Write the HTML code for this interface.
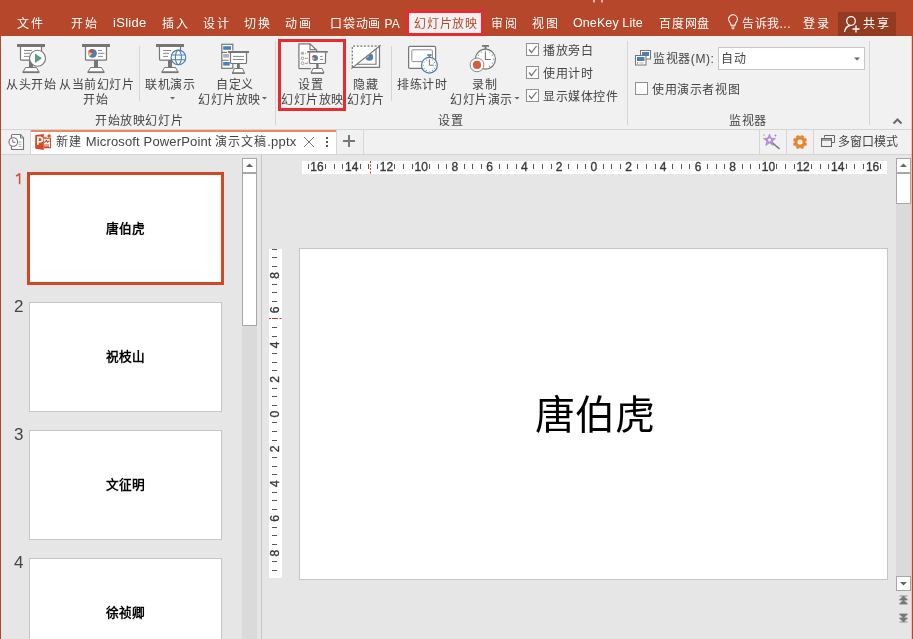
<!DOCTYPE html>
<html lang="zh-CN">
<head>
<meta charset="utf-8">
<style>
*{margin:0;padding:0;box-sizing:border-box}
html,body{width:913px;height:639px;overflow:hidden}
body{position:relative;background:#e6e6e6;font-family:"Liberation Sans",sans-serif;font-size:12px;color:#444}
.a{position:absolute}
.t{position:absolute;white-space:nowrap;line-height:14px;font-size:12px}
.m{position:absolute;white-space:nowrap;line-height:14px;font-size:12px;letter-spacing:1.5px}
.w{color:#fff}
#title{left:0;top:0;width:913px;height:36px;background:#b7472a}
#ribbon{left:0;top:36px;width:913px;height:94px;background:#f1f1f1;border-bottom:1px solid #d5d5d5}
#tabbar{left:0;top:130px;width:913px;height:25px;background:#f1f1f1;border-bottom:1px solid #d5d5d5}
.r{position:absolute;white-space:nowrap;line-height:14px;font-size:12px;color:#444;letter-spacing:.6px}
.th{position:absolute;white-space:nowrap;line-height:14px;font-size:12.7px;font-weight:bold;color:#000}
.sep{position:absolute;width:1px;background:#d5d5d5}
.cb{position:absolute;width:13px;height:13px;border:1px solid #8a8a8a;background:#fff}
</style>
</head>
<body>
<div id="wrap" style="position:absolute;left:0;top:0;width:913px;height:639px;will-change:transform">
<div id="title" class="a"></div>
<div id="ribbon" class="a"></div>
<div id="tabbar" class="a"></div>
<!-- menu -->
<div class="m w" style="left:17px;top:17px">文件</div>
<div class="m w" style="left:71px;top:17px">开始</div>
<div class="m w" style="left:113px;top:16px;font-size:13px;letter-spacing:.3px">iSlide</div>
<div class="m w" style="left:162px;top:17px">插入</div>
<div class="m w" style="left:203px;top:17px">设计</div>
<div class="m w" style="left:244px;top:17px">切换</div>
<div class="m w" style="left:285px;top:17px">动画</div>
<div class="m w" style="left:330px;top:17px;letter-spacing:.8px">口袋动画<span style="font-size:12px;letter-spacing:0"> PA</span></div>
<div class="a" style="left:406px;top:10px;width:78px;height:26px;background:#f1f1f1;border:3px solid #ea2a2f"></div>
<div class="m" style="left:414px;top:17px;color:#b7472a;letter-spacing:.8px">幻灯片放映</div>
<div class="m w" style="left:491px;top:17px">审阅</div>
<div class="m w" style="left:532px;top:17px">视图</div>
<div class="m w" style="left:573px;top:16px;font-size:12.5px;letter-spacing:.1px">OneKey Lite</div>
<div class="m w" style="left:659px;top:17px;letter-spacing:.8px">百度网盘</div>
<div class="m w" style="left:742px;top:17px;letter-spacing:.5px">告诉我...</div>
<div class="m w" style="left:803px;top:17px">登录</div>
<div class="a" style="left:838px;top:12px;width:58px;height:24px;background:#923b21"></div>
<div class="m w" style="left:863px;top:17px">共享</div>



<svg class="a" style="left:726px;top:14px" width="14" height="17" viewBox="0 0 14 17">
 <path d="M5,11.3 Q5,9.6 3.9,8.3 Q2.6,6.8 2.6,5.2 A4.4,4.4 0 0 1 11.4,5.2 Q11.4,6.8 10.1,8.3 Q9,9.6 9,11.3 Z" fill="none" stroke="#fff" stroke-width="1.1"/>
 <path d="M5.2,13 H8.8 M5.8,14.8 H8.2" stroke="#fff" stroke-width="1.1"/>
</svg>
<svg class="a" style="left:843px;top:15px" width="18" height="18" viewBox="0 0 18 18">
 <circle cx="8" cy="6" r="4.3" fill="none" stroke="#fff" stroke-width="1.3"/>
 <path d="M1.5,17 Q2.5,11.5 7,10.5" fill="none" stroke="#fff" stroke-width="1.3"/>
 <path d="M13,10.5 V17.5 M9.5,14 H16.5" stroke="#fff" stroke-width="1.3"/>
</svg>
<svg class="a" style="left:590px;top:0" width="16" height="3"><path d="M4,0 V2.5 M12,0 V2.5" stroke="#fff" stroke-width="1.2"/></svg>
<!-- ribbon icons -->
<svg class="a" style="left:0;top:35px" width="911" height="94" viewBox="0 35 911 94">
<defs>
<g id="pj">
 <rect x="0" y="0" width="28" height="3" fill="#767676"/>
 <path d="M3.5,3 V15.3 Q3.5,16.2 4.5,16.2 H23.5 Q24.5,16.2 24.5,15.3 V3" fill="#fff" stroke="#767676" stroke-width="1.2"/>
 <rect x="12" y="16" width="4" height="7" fill="#767676"/>
 <path d="M8.5,23.5 H19.5 L22,28 H6 Z" fill="#fff" stroke="#767676" stroke-width="1"/>
 <rect x="5.5" y="27.5" width="17" height="1.6" fill="#767676"/>
</g>
</defs>
<!-- icon1 从头开始 -->
<g transform="translate(17,44)">
 <use href="#pj"/>
 <path d="M7,6.5 H15 M7,9.3 H13 M7,12.4 H12" stroke="#8a8a8a" stroke-width="1"/>
 <circle cx="20.5" cy="14.3" r="8" fill="#fff" stroke="#767676" stroke-width="1.1"/>
 <path d="M18,9.6 L25,14.3 L18,19 Z" fill="#5c9f87"/>
</g>
<!-- icon2 从当前幻灯片开始 -->
<g transform="translate(82,44)">
 <use href="#pj"/>
 <circle cx="10.5" cy="9.3" r="4.4" fill="#4a7ebb"/>
 <path d="M10.5,9.3 L10.5,4.9 A4.4,4.4 0 0 0 6.3,8 Z" fill="#d9472b"/>
 <path d="M10.5,9.3 L6.3,8 A4.4,4.4 0 0 0 7.5,12.5 Z" fill="#f0c27f"/>
 <path d="M16,6.5 H20 M16,9.3 H22.5 M16,12.4 H21" stroke="#8a8a8a" stroke-width="1"/>
</g>
<!-- icon3 联机演示 -->
<g transform="translate(156,44)">
 <use href="#pj"/>
 <path d="M7,6.5 H15 M7,9.3 H13 M7,12.4 H12" stroke="#8a8a8a" stroke-width="1"/>
 <circle cx="22.4" cy="13.4" r="7.3" fill="#fff" stroke="#4a7ebb" stroke-width="1.2"/>
 <ellipse cx="22.4" cy="13.4" rx="3" ry="7.3" fill="none" stroke="#4a7ebb" stroke-width="1.1"/>
 <path d="M15.2,11 H29.6 M15.2,15.8 H29.6" stroke="#4a7ebb" stroke-width="1.1"/>
</g>
<!-- icon4 自定义幻灯片放映 -->
<g transform="translate(215,38)">
 <rect x="6.8" y="6.3" width="11" height="24" fill="#fff" stroke="#767676" stroke-width="1.2"/>
 <path d="M6.8,14.4 H12 M6.8,22.2 H13.8" stroke="#767676" stroke-width="1.1"/>
 <rect x="8.2" y="8.2" width="7.8" height="3.6" fill="#4a7ebb"/>
 <rect x="8.2" y="16" width="5.8" height="3.6" fill="#b0b0b0"/>
 <rect x="8.2" y="24" width="6.5" height="3.6" fill="#4a7ebb"/>
 <rect x="12.3" y="12.5" width="22.5" height="3.5" fill="#f1f1f1"/>
 <rect x="13" y="13" width="21" height="2" fill="#767676"/>
 <path d="M15.5,15 V24.5 Q15.5,25.5 16.5,25.5 H30.5 Q31.5,25.5 31.5,24.5 V15" fill="#fff" stroke="#767676" stroke-width="1.2"/>
 <path d="M18,18.4 H29 M18,21.5 H29" stroke="#8a8a8a" stroke-width="1"/>
 <rect x="22" y="25.5" width="2.8" height="6" fill="#767676"/>
 <path d="M19.5,30.5 H27.5 L29.5,35 H17.5 Z" fill="#fff" stroke="#767676" stroke-width="1"/>
 <rect x="17" y="34.5" width="13" height="1.4" fill="#767676"/>
</g>
<!-- icon5 设置幻灯片放映 -->
<g transform="translate(290,38)">
 <path d="M8.9,30.6 V5.8 H20 L26.7,12.2 V14" fill="#fff" stroke="#767676" stroke-width="1.2"/>
 <path d="M20,5.8 V11.6 H26.7" fill="none" stroke="#767676" stroke-width="1.1"/>
 <path d="M8.9,30.6 H21" stroke="#767676" stroke-width="1.2"/>
 <circle cx="12.5" cy="15.3" r="1.3" fill="#b0b0b0" stroke="#999" stroke-width=".6"/>
 <circle cx="12.5" cy="20.3" r="1.3" fill="#fff" stroke="#888" stroke-width=".8"/>
 <circle cx="12.5" cy="25.3" r="1.3" fill="#fff" stroke="#888" stroke-width=".8"/>
 <path d="M15,15.3 H16 M15,20.3 H18 M15,25.3 H18" stroke="#999" stroke-width="1"/>
 <rect x="17.2" y="13" width="20.6" height="1.8" fill="#767676"/>
 <path d="M19.5,14.8 V24.5 Q19.5,25.5 20.5,25.5 H34.5 Q35.5,25.5 35.5,24.5 V14.8" fill="#fff" stroke="#767676" stroke-width="1.2"/>
 <circle cx="25" cy="20" r="3" fill="#4a7ebb"/>
 <path d="M25,20 V17 A3,3 0 0 0 22.2,19 Z" fill="#d9472b"/>
 <path d="M25,20 L22.2,19 A3,3 0 0 0 23,22.2 Z" fill="#f0c27f"/>
 <path d="M30,18.4 H32.5 M30,21.5 H33" stroke="#8a8a8a" stroke-width="1"/>
 <rect x="26.2" y="25.5" width="2.4" height="6" fill="#767676"/>
 <path d="M23,30.5 H32 L34,35 H21 Z" fill="#fff" stroke="#767676" stroke-width="1"/>
 <rect x="21" y="34.5" width="13" height="1.4" fill="#767676"/>
</g>
<!-- icon6 隐藏幻灯片 -->
<g transform="translate(345,38)">
 <rect x="7.3" y="8.2" width="27.5" height="21" fill="#fff"/>
 <path d="M7.3,29 V8.2 H34.5" fill="none" stroke="#767676" stroke-width="1.2" stroke-dasharray="2,1.6"/>
 <path d="M34.5,8.2 V29.4 H7.3" fill="none" stroke="#767676" stroke-width="1.2"/>
 <path d="M31,11 V26.3 H12" fill="none" stroke="#767676" stroke-width="1.1"/>
 <clipPath id="hc"><path d="M6.3,31.5 L36.5,7.2 L36.5,31.5 Z"/></clipPath>
 <g clip-path="url(#hc)">
 <circle cx="24.4" cy="19" r="3.8" fill="#4a7ebb"/>
 <path d="M24.4,19 L21.5,16.5 A3.8,3.8 0 0 0 20.8,20 Z" fill="#f0c27f"/>
 <path d="M24.4,19 L24.4,15.2 A3.8,3.8 0 0 0 21.5,16.5 Z" fill="#d9472b"/>
 </g>
 <path d="M6.3,30.6 L35.6,7.2" stroke="#767676" stroke-width="1.2"/>
</g>
<!-- icon7 排练计时 -->
<g transform="translate(400,38)">
 <rect x="8.6" y="8.4" width="27" height="22" rx="1.2" fill="#fff" stroke="#767676" stroke-width="1.2"/>
 <rect x="11.8" y="11.8" width="20.6" height="11.8" rx="1" fill="#fff" stroke="#8f8f8f" stroke-width="1"/>
 <rect x="27.2" y="16.2" width="4.4" height="1.6" fill="#767676"/>
 <rect x="28.6" y="17.5" width="1.6" height="2" fill="#767676"/>
 <circle cx="29.4" cy="27.2" r="7.9" fill="#fff" stroke="#4a7ebb" stroke-width="1.2"/>
 <path d="M29.4,21.5 V27.2 H33.8" fill="none" stroke="#767676" stroke-width="1"/>
 <g fill="#888"><circle cx="35.40" cy="27.20" r=".55"/><circle cx="34.60" cy="30.20" r=".55"/><circle cx="32.40" cy="32.40" r=".55"/><circle cx="29.40" cy="33.20" r=".55"/><circle cx="26.40" cy="32.40" r=".55"/><circle cx="24.20" cy="30.20" r=".55"/><circle cx="23.40" cy="27.20" r=".55"/><circle cx="24.20" cy="24.20" r=".55"/><circle cx="26.40" cy="22.00" r=".55"/><circle cx="29.40" cy="21.20" r=".55"/><circle cx="32.40" cy="22.00" r=".55"/><circle cx="34.60" cy="24.20" r=".55"/></g>
</g>
<!-- icon8 录制 -->
<g transform="translate(462,38)">
 <circle cx="23.4" cy="21.2" r="10" fill="#fff" stroke="#767676" stroke-width="1.2"/>
 <rect x="20" y="7" width="7" height="1.8" fill="#767676"/>
 <rect x="22.6" y="8.5" width="1.8" height="2.6" fill="#767676"/>
 <path d="M23.4,14 V21.5 H28.8" fill="none" stroke="#767676" stroke-width="1.1"/>
 <g fill="#888"><circle cx="31.40" cy="21.20" r=".6"/><circle cx="30.33" cy="25.20" r=".6"/><circle cx="27.40" cy="28.13" r=".6"/><circle cx="15.40" cy="21.20" r=".6"/><circle cx="16.47" cy="17.20" r=".6"/><circle cx="19.40" cy="14.27" r=".6"/><circle cx="23.40" cy="13.20" r=".6"/><circle cx="27.40" cy="14.27" r=".6"/><circle cx="30.33" cy="17.20" r=".6"/></g>
 <circle cx="15" cy="26.9" r="6.9" fill="#fff" stroke="#8a8a8a" stroke-width="1"/>
 <circle cx="15" cy="26.9" r="4.1" fill="#dc5a3d"/>
</g>
<!-- checkboxes -->
<g fill="#fdfdfd" stroke="#8f8f8f" stroke-width="1">
 <rect x="526.5" y="43.5" width="12" height="12"/>
 <rect x="526.5" y="66.5" width="12" height="12"/>
 <rect x="526.5" y="89.5" width="12" height="12"/>
 <rect x="635.5" y="82.5" width="12" height="12"/>
</g>
<g fill="none" stroke="#707070" stroke-width="1.2">
 <path d="M529,49.5 L531.5,52.5 L536.5,46"/>
 <path d="M529,72.5 L531.5,75.5 L536.5,69"/>
 <path d="M529,95.5 L531.5,98.5 L536.5,92"/>
</g>
<!-- monitor icon -->
<g>
 <rect x="640.5" y="50.5" width="10" height="8.5" fill="#fff" stroke="#767676" stroke-width="1"/>
 <rect x="642" y="52" width="7" height="4" fill="#4a7ebb"/>
 <rect x="635.5" y="55.5" width="10.5" height="9.5" fill="#fff" stroke="#767676" stroke-width="1"/>
 <rect x="637" y="57" width="7.5" height="4" fill="#4a7ebb"/>
 <rect x="637" y="62.3" width="1.2" height="1.2" fill="#d9472b"/>
 <path d="M639.5,63 H643.5" stroke="#999" stroke-width=".8"/>
</g>
<!-- dropdown -->
<rect x="718.5" y="47.5" width="146" height="22" fill="#fff" stroke="#c6c6c6" stroke-width="1"/>
<path d="M854,57.5 H860 L857,60.5 Z" fill="#666"/>
<!-- separators -->
<g fill="#d5d5d5">
 <rect x="139" y="46" width="1" height="55"/>
 <rect x="275" y="41" width="1" height="84"/>
 <rect x="391" y="46" width="1" height="55"/>
 <rect x="627" y="41" width="1" height="84"/>
 <rect x="869" y="41" width="1" height="84"/>
</g>
<!-- small dropdown arrows -->
<g fill="#666">
 <path d="M170,97 H175 L172.5,99.5 Z"/>
 <path d="M262,97 H267 L264.5,99.5 Z"/>
 <path d="M514.5,97 H519.5 L517,99.5 Z"/>
</g>
<!-- collapse chevron -->
<path d="M893.5,123.5 L897.5,119.5 L901.5,123.5" fill="none" stroke="#6a6a6a" stroke-width="2"/>
<!-- red annotation box -->
<rect x="279.5" y="40.5" width="65" height="69" fill="none" stroke="#ea2a2f" stroke-width="3"/>
</svg>
<!-- ribbon labels -->
<div class="r" style="left:6px;top:78px">从头开始</div>
<div class="r" style="left:59px;top:78px">从当前幻灯片</div>
<div class="r" style="left:83px;top:93px">开始</div>
<div class="r" style="left:145px;top:78px">联机演示</div>
<div class="r" style="left:216px;top:78px">自定义</div>
<div class="r" style="left:198px;top:93px">幻灯片放映</div>
<div class="r" style="left:95px;top:114px">开始放映幻灯片</div>
<div class="r" style="left:298px;top:78px">设置</div>
<div class="r" style="left:281px;top:93px">幻灯片放映</div>
<div class="r" style="left:353px;top:78px">隐藏</div>
<div class="r" style="left:347px;top:93px">幻灯片</div>
<div class="r" style="left:397px;top:78px">排练计时</div>
<div class="r" style="left:472px;top:78px">录制</div>
<div class="r" style="left:450px;top:93px">幻灯片演示</div>
<div class="r" style="left:543px;top:44px">播放旁白</div>
<div class="r" style="left:543px;top:67px">使用计时</div>
<div class="r" style="left:543px;top:90px">显示媒体控件</div>
<div class="r" style="left:438px;top:114px">设置</div>
<div class="r" style="left:653px;top:52px">监视器(M):</div>
<div class="r" style="left:721px;top:52px">自动</div>
<div class="r" style="left:652px;top:83px">使用演示者视图</div>
<div class="r" style="left:729px;top:114px">监视器</div>


<!-- tab bar -->
<div class="a" style="left:1px;top:130px;width:30px;height:25px;border-right:1px solid #d5d5d5;border-bottom:1px solid #d5d5d5;background:#f1f1f1"></div>
<svg class="a" style="left:8px;top:132px" width="20" height="20" viewBox="0 0 20 20">
 <path d="M3.5,3 V17.5 H15.5 V6 L12.5,2.5 H3.5" fill="#fff" stroke="#767676" stroke-width="1.1"/>
 <path d="M12.5,2.5 V6 H15.5" fill="none" stroke="#767676" stroke-width="1"/>
 <path d="M10.5,10 H13.5 M10.5,12.2 H13.5 M10.5,14.4 H13.5" stroke="#999" stroke-width=".8"/>
 <circle cx="5.3" cy="10" r="4.3" fill="#fff" stroke="#767676" stroke-width="1.1"/>
 <path d="M4.8,7.5 V10.3" stroke="#d9472b" stroke-width="1"/>
 <path d="M4.8,10.3 H7.5" stroke="#4a7ebb" stroke-width="1"/>
</svg>
<div class="a" style="left:31px;top:130px;width:305px;height:24px;background:#fff;border-top:2px solid #ee8a5f"></div>
<div class="a" style="left:336px;top:130px;width:1px;height:25px;background:#d5d5d5"></div>
<div class="a" style="left:363px;top:130px;width:1px;height:25px;background:#d5d5d5"></div>
<svg class="a" style="left:34px;top:133px" width="20" height="18" viewBox="0 0 20 18">
 <path d="M9.5,5.2 H16.5 V14.6 H9.5" fill="#fff" stroke="#d24a26" stroke-width="1.1"/>
 <path d="M10,9.8 L12.5,7.5 L13.5,9.3 L15.5,7.8" fill="none" stroke="#d24a26" stroke-width="1.1"/>
 <path d="M10,12 H15 M10,13.8 H15 M10,4.2 H12.5" stroke="#d24a26" stroke-width="1.1"/>
 <path d="M1.2,2.8 Q1.2,2.2 1.8,2.1 L9.8,1 V17 L1.8,15.7 Q1.2,15.6 1.2,15 Z" fill="#d24a26"/>
 <path d="M3.9,11.8 V4.4 H6.2 Q8.4,4.4 8.4,6.6 Q8.4,8.8 6.2,8.8 H4.5" fill="none" stroke="#fff" stroke-width="1.7"/>
 <circle cx="15.1" cy="3" r="1.8" fill="#f25022"/>
</svg>
<div class="t" style="left:56px;top:135px;font-size:13px;letter-spacing:.15px;color:#444"><span style="font-size:12px;letter-spacing:1px">新建</span> Microsoft PowerPoint <span style="font-size:12px;letter-spacing:1px">演示文稿</span>.pptx</div>
<svg class="a" style="left:303px;top:136px" width="12" height="12" viewBox="0 0 12 12"><path d="M1,1 L11,11 M11,1 L1,11" stroke="#777" stroke-width="1"/></svg>
<div class="a" style="left:326px;top:137px;width:2px;height:2px;background:#555"></div>
<div class="a" style="left:326px;top:141px;width:2px;height:2px;background:#555"></div>
<div class="a" style="left:326px;top:145px;width:2px;height:2px;background:#555"></div>
<div class="a" style="left:343px;top:140px;width:12px;height:2px;background:#777"></div>
<div class="a" style="left:348px;top:135px;width:2px;height:12px;background:#777"></div>
<!-- right icons in tabbar -->
<div class="a" style="left:759px;top:130px;width:1px;height:25px;background:#d5d5d5"></div>
<div class="a" style="left:786px;top:130px;width:1px;height:25px;background:#d5d5d5"></div>
<div class="a" style="left:813px;top:130px;width:1px;height:25px;background:#d5d5d5"></div>
<svg class="a" style="left:762px;top:132px" width="20" height="20" viewBox="0 0 20 20">
 <path d="M9.5,10 L17.5,17" stroke="#777" stroke-width="1.6"/>
 <path d="M7.5,2 L9.2,6.1 L13.6,6.4 L10.2,9.2 L11.3,13.5 L7.5,11.1 L3.7,13.5 L4.8,9.2 L1.4,6.4 L5.8,6.1 Z" fill="#b592e0" stroke="#9a72c9" stroke-width=".5"/>
 <circle cx="7.5" cy="8" r="1.4" fill="#fff"/>
 <path d="M13.5,2.5 L13.5,4.5 M12.5,3.5 L14.5,3.5 M2,2.5 V3.5 M1.5,3 H2.5" stroke="#9a72c9" stroke-width=".7"/>
</svg>
<svg class="a" style="left:793px;top:135px" width="14" height="14" viewBox="0 0 14 14">
 <g fill="#e8842f"><circle cx="11.90" cy="9.03" r="1.9"/><circle cx="9.03" cy="11.90" r="1.9"/><circle cx="4.97" cy="11.90" r="1.9"/><circle cx="2.10" cy="9.03" r="1.9"/><circle cx="2.10" cy="4.97" r="1.9"/><circle cx="4.97" cy="2.10" r="1.9"/><circle cx="9.03" cy="2.10" r="1.9"/><circle cx="11.90" cy="4.97" r="1.9"/><circle cx="7" cy="7" r="5.4"/></g>
 <circle cx="7" cy="7" r="2.6" fill="#f1f1f1"/>
</svg>
<svg class="a" style="left:820px;top:134px" width="16" height="14" viewBox="0 0 16 14">
 <path d="M4.5,3.5 V1.5 H14.5 V8.5 H11.5" fill="none" stroke="#666" stroke-width="1"/>
 <rect x="1.5" y="4.5" width="10" height="8" fill="none" stroke="#666" stroke-width="1"/>
 <path d="M1.5,6 H11.5" stroke="#666" stroke-width="1.2"/>
</svg>
<div class="t" style="left:838px;top:135px;font-size:12px;letter-spacing:.1px;color:#444">多窗口模式</div>

<!-- thumbnail panel -->
<svg class="a" style="left:14px;top:172px" width="10" height="14" viewBox="0 0 10 14"><path d="M5.6,1.3 V12.2 M5.6,1.3 Q4.5,3 2,4" fill="none" stroke="#d24f2f" stroke-width="1.5"/></svg>
<div class="a" style="left:27px;top:172px;width:197px;height:113px;border:3px solid #d24726;background:#fff"></div>
<div class="t" style="left:14px;top:300px;font-size:17px;color:#444">2</div>
<div class="a" style="left:29px;top:302px;width:193px;height:110px;border:1px solid #c6c6c6;background:#fff"></div>
<div class="t" style="left:14px;top:428px;font-size:17px;color:#444">3</div>
<div class="a" style="left:29px;top:430px;width:193px;height:110px;border:1px solid #c6c6c6;background:#fff"></div>
<div class="t" style="left:14px;top:556px;font-size:17px;color:#444">4</div>
<div class="a" style="left:29px;top:558px;width:193px;height:110px;border:1px solid #c6c6c6;background:#fff"></div>
<div class="th" style="left:106px;top:222px">唐伯虎</div>
<div class="th" style="left:106px;top:350px">祝枝山</div>
<div class="th" style="left:106px;top:478px">文征明</div>
<div class="th" style="left:106px;top:606px">徐祯卿</div>
<!-- thumb scrollbar -->
<div class="a" style="left:242px;top:158px;width:15px;height:481px;background:#dadada"></div>
<div class="a" style="left:242px;top:158px;width:15px;height:15px;background:#fff;border:1px solid #a8a8a8"></div>
<svg class="a" style="left:242px;top:158px" width="15" height="15"><path d="M4,9 H11 L7.5,5.5 Z" fill="#666"/></svg>
<div class="a" style="left:242px;top:173px;width:15px;height:153px;background:#fff;border:1px solid #a8a8a8"></div>
<div class="a" style="left:261px;top:155px;width:1px;height:484px;background:#c6c6c6"></div>

<!-- main area -->
<svg class="a" style="left:0;top:155px" width="913" height="484" viewBox="0 155 913 484">
<rect x="302" y="161" width="585" height="13" fill="#fff"/>
<rect x="269" y="249" width="13" height="329" fill="#fff"/>
<path d="M308.5,164 V169 M325.5,164 V169 M334.5,164 V169 M342.5,164 V169 M360.5,164 V169 M368.5,164 V169 M377.5,164 V169 M394.5,164 V169 M403.5,164 V169 M412.5,164 V169 M429.5,164 V169 M438.5,164 V169 M446.5,164 V169 M464.5,164 V169 M472.5,164 V169 M481.5,164 V169 M499.5,164 V169 M507.5,164 V169 M516.5,164 V169 M533.5,164 V169 M542.5,164 V169 M551.5,164 V169 M568.5,164 V169 M577.5,164 V169 M585.5,164 V169 M603.5,164 V169 M611.5,164 V169 M620.5,164 V169 M637.5,164 V169 M646.5,164 V169 M655.5,164 V169 M672.5,164 V169 M681.5,164 V169 M689.5,164 V169 M707.5,164 V169 M716.5,164 V169 M724.5,164 V169 M742.5,164 V169 M750.5,164 V169 M759.5,164 V169 M776.5,164 V169 M785.5,164 V169 M794.5,164 V169 M811.5,164 V169 M820.5,164 V169 M828.5,164 V169 M846.5,164 V169 M854.5,164 V169 M863.5,164 V169 M880.5,164 V169" stroke="#555" stroke-width="1"/>
<g font-size="12" fill="#3a3a3a" stroke="#3a3a3a" stroke-width=".35" font-family="Liberation Sans, sans-serif"><text x="317.0" y="171" text-anchor="middle">16</text><text x="351.8" y="171" text-anchor="middle">14</text><text x="386.5" y="171" text-anchor="middle">12</text><text x="421.2" y="171" text-anchor="middle">10</text><text x="454.9" y="171" text-anchor="middle">8</text><text x="489.6" y="171" text-anchor="middle">6</text><text x="524.4" y="171" text-anchor="middle">4</text><text x="559.1" y="171" text-anchor="middle">2</text><text x="593.8" y="171" text-anchor="middle">0</text><text x="628.5" y="171" text-anchor="middle">2</text><text x="663.2" y="171" text-anchor="middle">4</text><text x="698.0" y="171" text-anchor="middle">6</text><text x="732.7" y="171" text-anchor="middle">8</text><text x="768.4" y="171" text-anchor="middle">10</text><text x="803.1" y="171" text-anchor="middle">12</text><text x="837.8" y="171" text-anchor="middle">14</text><text x="872.6" y="171" text-anchor="middle">16</text></g>
<path d="M272,249.5 H277 M272,257.5 H277 M272,266.5 H277 M272,284.5 H277 M272,292.5 H277 M272,301.5 H277 M272,318.5 H277 M272,327.5 H277 M272,336.5 H277 M272,353.5 H277 M272,362.5 H277 M272,370.5 H277 M272,388.5 H277 M272,396.5 H277 M272,405.5 H277 M272,422.5 H277 M272,431.5 H277 M272,440.5 H277 M272,457.5 H277 M272,466.5 H277 M272,474.5 H277 M272,492.5 H277 M272,500.5 H277 M272,509.5 H277 M272,527.5 H277 M272,535.5 H277 M272,544.5 H277 M272,561.5 H277 M272,570.5 H277" stroke="#555" stroke-width="1"/>
<g font-size="12" fill="#3a3a3a" stroke="#3a3a3a" stroke-width=".35" font-family="Liberation Sans, sans-serif"><text x="0" y="0" transform="translate(279,275.3) rotate(-90)" text-anchor="middle">8</text><text x="0" y="0" transform="translate(279,310.0) rotate(-90)" text-anchor="middle">6</text><text x="0" y="0" transform="translate(279,344.8) rotate(-90)" text-anchor="middle">4</text><text x="0" y="0" transform="translate(279,379.5) rotate(-90)" text-anchor="middle">2</text><text x="0" y="0" transform="translate(279,414.2) rotate(-90)" text-anchor="middle">0</text><text x="0" y="0" transform="translate(279,448.9) rotate(-90)" text-anchor="middle">2</text><text x="0" y="0" transform="translate(279,483.6) rotate(-90)" text-anchor="middle">4</text><text x="0" y="0" transform="translate(279,518.4) rotate(-90)" text-anchor="middle">6</text><text x="0" y="0" transform="translate(279,553.1) rotate(-90)" text-anchor="middle">8</text></g>
<path d="M370.5,161 V175" stroke="#e03a1e" stroke-width="1" stroke-dasharray="2,1.5"/>
<path d="M269,318.5 H283" stroke="#e03a1e" stroke-width="1" stroke-dasharray="2,1.5"/>
</svg>
<div class="a" style="left:299px;top:248px;width:589px;height:332px;background:#fff;border:1px solid #c6c6c6"></div>
<div class="a" style="left:535px;top:393px;font-family:'Liberation Serif',serif;font-size:40px;line-height:46px;font-weight:300;color:#000;white-space:nowrap">唐伯虎</div>
<!-- right scrollbar -->
<div class="a" style="left:896px;top:158px;width:15px;height:430px;background:#dadada"></div>
<div class="a" style="left:896px;top:158px;width:15px;height:15px;background:#fff;border:1px solid #a8a8a8"></div>
<svg class="a" style="left:896px;top:158px" width="15" height="15"><path d="M4,9 H11 L7.5,5.5 Z" fill="#666"/></svg>
<div class="a" style="left:896px;top:173px;width:15px;height:31px;background:#fff;border:1px solid #a8a8a8"></div>
<div class="a" style="left:896px;top:576px;width:15px;height:15px;background:#fff;border:1px solid #a8a8a8"></div>
<svg class="a" style="left:896px;top:576px" width="15" height="15"><path d="M4,6 H11 L7.5,9.5 Z" fill="#666"/></svg>
<svg class="a" style="left:896px;top:593px" width="15" height="40" viewBox="0 0 15 40">
 <path d="M3.5,7 L7.5,3 L11.5,7 Z M3.5,11 L7.5,7 L11.5,11 Z M3.5,3 H11.5" fill="#777" stroke="#777" stroke-width=".8"/>
 <path d="M3.5,21 L7.5,25 L11.5,21 Z M3.5,25 L7.5,29 L11.5,25 Z M3.5,29 H11.5" fill="#777" stroke="#777" stroke-width=".8"/>
</svg>

<!-- left/right red borders -->
<div class="a" style="left:0;top:0;width:1px;height:639px;background:#b7472a"></div>
<div class="a" style="left:911px;top:0;width:1px;height:639px;background:rgba(183,71,42,.2)"></div><div class="a" style="left:912px;top:0;width:1px;height:639px;background:#b7472a"></div>
</div>
</body>
</html>
